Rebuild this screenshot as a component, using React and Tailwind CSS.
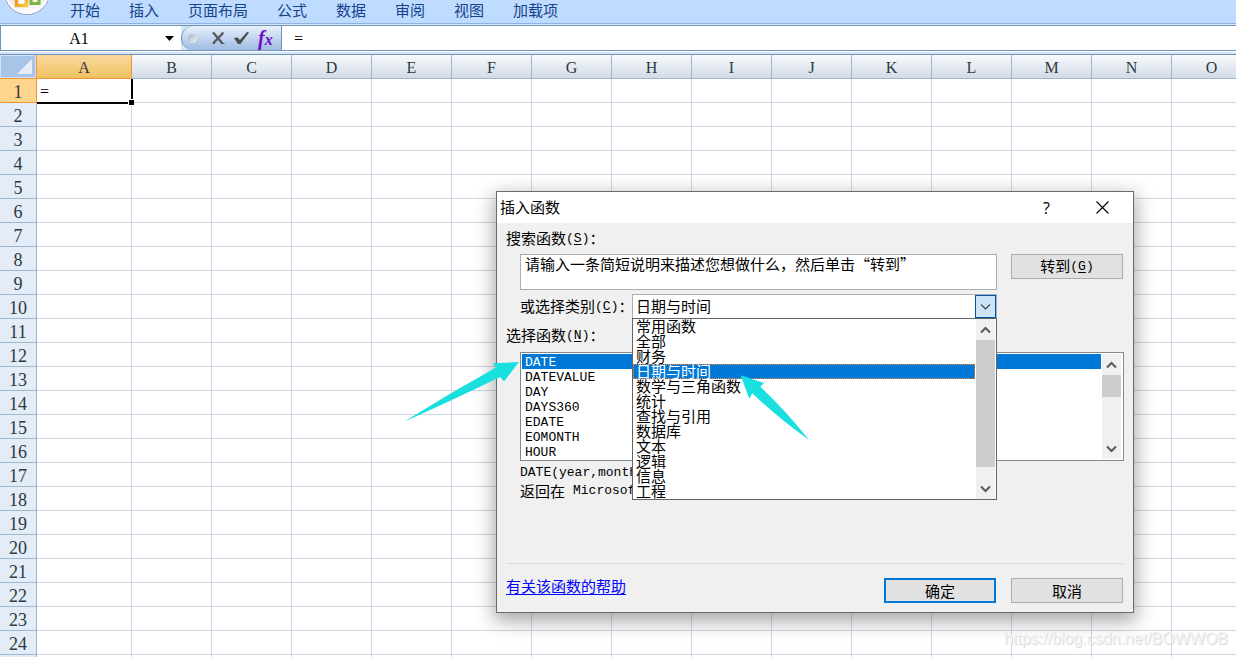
import React from 'react';

const TABS = ['开始', '插入', '页面布局', '公式', '数据', '审阅', '视图', '加载项'];
const COLUMNS = 'ABCDEFGHIJKLMNO'.split('');
const ROWS = Array.from({ length: 24 }, (_, i) => i + 1);
const FUNCTIONS = ['DATE', 'DATEVALUE', 'DAY', 'DAYS360', 'EDATE', 'EOMONTH', 'HOUR'];
const CATEGORIES = [
  '常用函数', '全部', '财务', '日期与时间', '数学与三角函数', '统计',
  '查找与引用', '数据库', '文本', '逻辑', '信息', '工程',
];

function OfficeButton() {
  return (
    <svg width="60" height="16" viewBox="0 0 60 16" className="shrink-0" aria-hidden="true">
      <defs>
        <linearGradient id="orb" x1="0" y1="0" x2="0" y2="1">
          <stop offset="0.5" stopColor="#dde3ec" />
          <stop offset="0.85" stopColor="#f3f6fa" />
          <stop offset="1" stopColor="#ffffff" />
        </linearGradient>
        <linearGradient id="gold" x1="0" y1="0" x2="1" y2="1">
          <stop offset="0" stopColor="#e88a1a" />
          <stop offset="1" stopColor="#fbc63a" />
        </linearGradient>
      </defs>
      <circle cx="27" cy="-8" r="22.5" fill="url(#orb)" stroke="#8a9ab3" />
      <circle cx="27" cy="-8" r="21" fill="none" stroke="#fff" strokeWidth="2" />
      <path d="M16.5 -4V5.5H26.5V-4" fill="#fff" stroke="url(#gold)" strokeWidth="3.6" />
      <path d="M31 -4V3.5H39V-4" fill="#eef7dc" stroke="#7cb342" strokeWidth="3" />
    </svg>
  );
}

function Chevron({ up = false, thin = false }) {
  return (
    <svg width="11" height="8" viewBox="0 0 11 8" fill="none" aria-hidden="true">
      <path
        d={up ? 'M1 6.5 5.5 2 10 6.5' : 'M1 1.5 5.5 6 10 1.5'}
        stroke={thin ? '#444' : '#5a5a5a'}
        strokeWidth={thin ? 1.1 : 2.1}
      />
    </svg>
  );
}

function ScrollBar({ thumb }) {
  return (
    <div className="flex w-[19px] shrink-0 flex-col items-stretch bg-[#f0f0f0]">
      <button type="button" aria-label="向上滚动" className="flex h-[21px] items-center justify-center">
        <Chevron up />
      </button>
      <div className={`bg-[#cdcdcd] ${thumb}`} />
      <div className="flex-1" />
      <button type="button" aria-label="向下滚动" className="flex h-[21px] items-center justify-center">
        <Chevron />
      </button>
    </div>
  );
}

function Key({ letter }) {
  return (
    <span className="font-['Liberation_Mono',monospace] text-[13px]">
      (<span className="underline underline-offset-2">{letter}</span>)
    </span>
  );
}

function Ribbon() {
  return (
    <nav className="flex h-6 shrink-0 items-start border-b border-[#8fb3e0] bg-[#bfdbff]">
      <OfficeButton />
      <div className="flex gap-[29px] pl-[10px] text-[15px] leading-5 text-[#15428b]">
        {TABS.map((tab) => (
          <button key={tab} type="button" className="whitespace-nowrap">{tab}</button>
        ))}
      </div>
    </nav>
  );
}

function FormulaBar() {
  return (
    <div className="shrink-0 bg-[#d5e5f8] pt-px">
      <div className="flex h-[26px] border-y border-l border-[#6f93b9] bg-white">
        <input
          aria-label="名称框"
          defaultValue="A1"
          className="w-[156px] bg-transparent pt-[2px] text-center font-['Liberation_Serif',serif] text-base outline-none"
        />
        <button type="button" aria-label="名称列表" className="flex w-6 items-center justify-center">
          <svg width="9" height="5" viewBox="0 0 9 5" aria-hidden="true"><path d="M0 0H9L4.5 5Z" fill="#000" /></svg>
        </button>
        <div className="flex bg-[#d5e5f8]">
          <div className="flex w-[101px] items-center rounded-l-full border-x border-[#6f93b9] bg-linear-to-b from-[#e9f1fb] to-[#9dbbe2] pl-[6px]">
            <span className="mr-[14px] size-[9px] rounded-full bg-linear-to-br from-[#a6adb8] to-[#f6f7f9]" />
            <button type="button" aria-label="取消输入" className="mr-2">
              <svg width="14" height="14" viewBox="0 0 14 14" fill="none" aria-hidden="true">
                <path d="M2.5 2 11.5 12.5M12 2 2.5 12" stroke="#55585e" strokeWidth="2.3" />
                <path d="M1 2H4M10.5 2H13M1.5 12.5H4M10.5 12.5H13.5" stroke="#55585e" />
              </svg>
            </button>
            <button type="button" aria-label="确认输入" className="mr-2">
              <svg width="17" height="14" viewBox="0 0 17 14" aria-hidden="true">
                <path d="M1 7 4.5 6.5 7 9 14 1 16 1.5 7.5 13 5 13Z" fill="#4b4b4b" />
              </svg>
            </button>
            <button type="button" aria-label="插入函数" className="flex items-end font-['Liberation_Serif',serif] font-bold italic text-[#7209c8]">
              <span className="text-xl leading-5">f</span>
              <span className="text-base leading-4">x</span>
            </button>
          </div>
        </div>
        <input
          aria-label="编辑栏"
          defaultValue="="
          className="min-w-0 flex-1 bg-transparent pt-[2px] pl-3 font-['Liberation_Serif',serif] text-base outline-none"
        />
      </div>
      <div className="h-[3px] border-t border-white" />
    </div>
  );
}

function Sheet() {
  return (
    <div className="min-h-0 flex-1 overflow-hidden border-t border-[#6f93b9]">
      <table className="w-[1252px] table-fixed border-separate border-spacing-0 font-['Liberation_Serif',serif] text-[#2b3a42]">
        <colgroup>
          <col className="w-[37px]" />
          {COLUMNS.map((c) => <col key={c} className={c === 'A' ? 'w-[95px]' : 'w-[80px]'} />)}
        </colgroup>
        <thead>
          <tr className="h-6">
            <th className="border-r border-b border-r-[#f29536] border-b-[#f29536] bg-[#a9c4e9] p-0">
              <button type="button" aria-label="全选" className="flex h-[23px] w-full items-end justify-end border border-[#d3e3f7] p-[3px]">
                <svg width="15" height="15" viewBox="0 0 15 15" aria-hidden="true">
                  <path d="M15 0V15H0Z" fill="#e6edf6" />
                </svg>
              </button>
            </th>
            {COLUMNS.map((c) => (
              <th
                key={c}
                scope="col"
                className={
                  c === 'A'
                    ? 'border-r border-b border-[#f29536] bg-linear-to-b from-[#f9d99f] to-[#f1c15f] p-0 pt-[3px] text-base leading-5 font-normal'
                    : 'border-r border-b border-[#9eb6ce] bg-linear-to-b from-[#f8fafc] to-[#d3dbe8] p-0 pt-[3px] text-base leading-5 font-normal'
                }
              >
                {c}
              </th>
            ))}
          </tr>
        </thead>
        <tbody>
          {ROWS.map((r) => (
            <tr key={r} className="h-6">
              <th
                scope="row"
                className={
                  r === 1
                    ? 'border-r border-b border-[#f29536] bg-[#ffd58d] p-0 pt-[2px] text-lg leading-5 font-normal'
                    : 'border-r border-b border-[#9eb6ce] bg-[#e4ecf7] p-0 pt-[2px] text-lg leading-5 font-normal'
                }
              >
                {r}
              </th>
              {COLUMNS.map((c) =>
                r === 1 && c === 'A' ? (
                  <td key={c} className="relative border-r border-b border-[#d0d7e5] p-0 pt-[2px] pl-[3px] text-base leading-5 text-black">
                    =
                    <div className="absolute inset-0 -right-[2px] -bottom-[2px] border-r-2 border-b-2 border-black" />
                    <div className="absolute -right-[3px] -bottom-[3px] size-[6px] border-t border-l border-white bg-black" />
                  </td>
                ) : (
                  <td key={c} className="border-r border-b border-[#d0d7e5] p-0" />
                )
              )}
            </tr>
          ))}
          <tr className="h-6">
            <th className="border-r border-[#9eb6ce] bg-[#e4ecf7] p-0" />
            {COLUMNS.map((c) => <td key={c} className="border-r border-[#d0d7e5] p-0" />)}
          </tr>
        </tbody>
      </table>
    </div>
  );
}

function CategoryPopup() {
  return (
    <div className="absolute top-6 right-0 left-0 z-10 flex border border-[#646464] bg-white">
      <ul role="listbox" aria-label="类别" className="min-w-0 flex-1 text-[15px] leading-[13px]">
        {CATEGORIES.map((name) => (
          <li
            key={name}
            role="option"
            aria-selected={name === '日期与时间'}
            className={
              name === '日期与时间'
                ? 'h-[15px] border border-dotted border-[#ff8728] bg-[#0078d7] pl-[2px] leading-[11px] text-white'
                : 'h-[15px] pl-[3px]'
            }
          >
            {name}
          </li>
        ))}
      </ul>
      <div className="flex pr-px pl-px">
        <ScrollBar thumb="h-[127px]" />
      </div>
    </div>
  );
}

function InsertFunctionDialog() {
  return (
    <section
      role="dialog"
      aria-label="插入函数"
      className="absolute top-[191px] left-[496px] w-[638px] border border-[#6b6b6b] bg-[#f0f0f0] text-[15px] text-black shadow-[0_6px_18px_2px_rgba(0,0,0,0.35)]"
    >
      <header className="flex h-[31px] items-center bg-white pr-6 pl-[3px]">
        <h1 className="flex-1">插入函数</h1>
        <button type="button" aria-label="帮助" className="mr-[46px] font-['Open_Sans',sans-serif] text-base">?</button>
        <button type="button" aria-label="关闭">
          <svg width="13" height="13" viewBox="0 0 13 13" aria-hidden="true">
            <path d="M0.5 0.5 12.5 12.5M12.5 0.5 0.5 12.5" stroke="#000" strokeWidth="1.1" />
          </svg>
        </button>
      </header>

      <div className="px-[9px] pb-[9px]">
        <label htmlFor="search" className="flex h-[31px] items-center">
          搜索函数<Key letter="S" />：
        </label>
        <div className="flex items-start gap-[14px] pr-px pl-[14px]">
          <textarea
            id="search"
            defaultValue="请输入一条简短说明来描述您想做什么，然后单击“转到”"
            className="block h-9 min-w-0 flex-1 resize-none overflow-hidden border border-[#abadb3] bg-white pl-1 leading-[17px] outline-none"
          />
          <button type="button" className="flex h-[25px] w-28 items-center justify-center border border-[#adadad] bg-[#e1e1e1]">
            转到<Key letter="G" />
          </button>
        </div>

        <div className="mt-1 flex h-[25px] items-center pr-[127px] pl-[14px]">
          <label htmlFor="category" className="flex w-28 shrink-0 items-center whitespace-nowrap">
            或选择类别<Key letter="C" />：
          </label>
          <div className="relative h-[25px] min-w-0 flex-1">
            <select
              id="category"
              defaultValue="日期与时间"
              className="block h-[25px] w-full appearance-none border border-[#abadb3] bg-white pl-[3px] outline-none"
            >
              {CATEGORIES.map((name) => <option key={name}>{name}</option>)}
            </select>
            <span className="pointer-events-none absolute top-px right-px flex h-[23px] w-[21px] items-center justify-center border border-[#0054a0] bg-[#cce4f7]">
              <Chevron thin />
            </span>
            <CategoryPopup />
          </div>
        </div>

        <div id="functions-label" className="flex h-[33px] items-center">
          选择函数<Key letter="N" />：
        </div>
        <div className="ml-[14px] flex border border-[#828790] bg-white p-px">
          <ul role="listbox" aria-labelledby="functions-label" className="min-w-0 flex-1 font-['Liberation_Mono',monospace] text-[13px] leading-[17px]">
            {FUNCTIONS.map((name) => (
              <li
                key={name}
                role="option"
                aria-selected={name === 'DATE'}
                className={name === 'DATE' ? 'h-[15px] bg-[#0078d7] pl-[3px] text-white' : 'h-[15px] pl-[3px]'}
              >
                {name}
              </li>
            ))}
          </ul>
          <div className="flex pr-px pl-px">
            <ScrollBar thumb="h-[22px]" />
          </div>
        </div>

        <div className="overflow-hidden pt-[3px] pl-[14px] leading-[18px] whitespace-nowrap">
          <p className="font-['Liberation_Mono',monospace] text-[13px] leading-[18px]">DATE(year,month,day)</p>
          <p className="flex items-center">
            返回在
            <span className="px-2 font-['Liberation_Mono',monospace] text-[13px]">Microsoft Excel</span>
            日期时间代码中代表日期的数字
          </p>
        </div>

        <footer className="mt-[63px] flex items-start border-t border-[#dcdcdc] pt-[14px] pr-px">
          <a href="#help" className="leading-4 text-[#0000ff] underline underline-offset-2">有关该函数的帮助</a>
          <button type="button" className="ml-auto h-[25px] w-28 border-2 border-[#0078d7] bg-[#e1e1e1]">
            <span className="block leading-5">确定</span>
          </button>
          <button type="button" className="ml-[15px] h-[25px] w-28 border border-[#adadad] bg-[#e1e1e1]">
            <span className="block leading-5">取消</span>
          </button>
        </footer>
      </div>
    </section>
  );
}

function Pointers() {
  return (
    <svg className="pointer-events-none absolute top-[355px] left-[400px] z-20" width="415" height="90" viewBox="400 355 415 90" aria-hidden="true">
      <g fill="#1adfdf">
        <path d="M519 362 493 363.3 496 367.5Q450 393 404 421.8Q455 399 500.3 377L504 381.5Z" />
        <path d="M740.5 375.2 764 383 760.3 386.7Q786 411 809 440Q778 418 752.3 393.3L749.3 398.7Z" />
      </g>
    </svg>
  );
}

export default function App() {
  return (
    <main className="relative flex h-screen flex-col overflow-hidden bg-white font-['Noto_Sans_CJK_SC',sans-serif]">
      <Ribbon />
      <FormulaBar />
      <Sheet />
      <InsertFunctionDialog />
      <Pointers />
      <p className="absolute right-2 bottom-2 font-['Liberation_Sans',sans-serif] text-base leading-5 text-[#f4f4f4] [text-shadow:1px_1px_1px_#d4d4d4]">
        https://blog.csdn.net/BOWWOB
      </p>
    </main>
  );
}
